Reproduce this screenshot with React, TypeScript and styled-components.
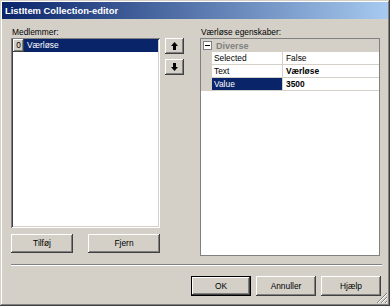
import styled, { createGlobalStyle } from "styled-components";

const Global = createGlobalStyle`
  html, body { margin: 0; padding: 0; background: #d4d0c8; }
  body { font-family: "Liberation Sans", Arial, sans-serif; font-size: 8.4px; color: #000; }
`;

const raised = `
  box-shadow: inset -1px -1px #404040, inset 1px 1px #ffffff,
    inset -2px -2px #808080, inset 2px 2px #d4d0c8;
`;

export default function App() {
  return (
    <>
      <Global />
      <Window>
        <TitleBar>ListItem Collection-editor</TitleBar>
        <Body>
          <Top>
            <LeftCol>
              <Label>Medlemmer:</Label>
              <ListBox>
                <ListRow>
                  <IndexCell>0</IndexCell>
                  <ItemName $selected>Værløse</ItemName>
                </ListRow>
              </ListBox>
              <ListButtons>
                <Button $w={62}>Tilføj</Button>
                <Button $w={72}>Fjern</Button>
              </ListButtons>
            </LeftCol>
            <ArrowCol>
              <ArrowButton>
                <Arrow dir="up" />
              </ArrowButton>
              <ArrowButton>
                <Arrow dir="down" />
              </ArrowButton>
            </ArrowCol>
            <RightCol>
              <Label>Værløse egenskaber:</Label>
              <PropGrid>
                <Category>
                  <Collapse>
                    <svg width="9" height="9" viewBox="0 0 9 9">
                      <rect x="0.5" y="0.5" width="8" height="8" fill="#fff" stroke="#808080" />
                      <path d="M2 4.5h5" stroke="#000" />
                    </svg>
                  </Collapse>
                  Diverse
                </Category>
                <PropRow>
                  <Margin />
                  <PropName>Selected</PropName>
                  <PropValue>False</PropValue>
                </PropRow>
                <PropRow>
                  <Margin />
                  <PropName>Text</PropName>
                  <PropValue $bold>Værløse</PropValue>
                </PropRow>
                <PropRow>
                  <Margin />
                  <PropName $selected>Value</PropName>
                  <PropValue $bold>3500</PropValue>
                </PropRow>
              </PropGrid>
            </RightCol>
          </Top>
          <Separator />
          <Footer>
            <DefaultButton>OK</DefaultButton>
            <Button $w={60} $h={20}>Annuller</Button>
            <Button $w={60} $h={20}>Hjælp</Button>
          </Footer>
        </Body>
        <Grip>
          <svg width="12" height="12" viewBox="0 0 12 12">
            <path d="M11 1L1 11M11 5L5 11M11 9L9 11" stroke="#808080" strokeWidth="1" />
            <path d="M11 2L2 11M11 6L6 11M11 10L10 11" stroke="#ffffff" strokeWidth="1" />
          </svg>
        </Grip>
      </Window>
    </>
  );
}

function Arrow({ dir }: { dir: "up" | "down" }) {
  return (
    <svg width="7" height="8" viewBox="0 0 7 8" style={{ transform: dir === "down" ? "rotate(180deg)" : undefined }}>
      <path d="M3.5 0L7 4H5V8H2V4H0Z" fill="#000" />
    </svg>
  );
}

const Window = styled.div`
  position: relative;
  width: 390px;
  height: 306px;
  box-sizing: border-box;
  padding: 2px;
  background: #d4d0c8;
  box-shadow: inset -1px -1px #404040, inset 1px 1px #d4d0c8,
    inset -2px -2px #808080, inset 2px 2px #ffffff;
  display: flex;
  flex-direction: column;
`;

const TitleBar = styled.div`
  height: 17px;
  line-height: 17px;
  padding-left: 3px;
  background: linear-gradient(to right, #0a246a, #a6caf0);
  color: #fff;
  font-weight: bold;
  font-size: 9.4px;
`;

const Body = styled.div`
  display: flex;
  flex-direction: column;
  padding: 7px 6px 0 9px;
`;

const Top = styled.div`
  display: flex;
`;

const LeftCol = styled.div`
  width: 149px;
  display: flex;
  flex-direction: column;
`;

const Label = styled.div`
  height: 12px;
  line-height: 12px;
  padding-left: 1px;
`;

const ListBox = styled.div`
  height: 190px;
  box-sizing: border-box;
  padding: 1px 2px 2px 2px;
  background: #fff;
  box-shadow: inset 1px 1px #808080, inset -1px -1px #ffffff,
    inset 2px 2px #404040, inset -2px -2px #d4d0c8;
`;

const ListRow = styled.div`
  display: flex;
  height: 13px;
  line-height: 13px;
`;

const IndexCell = styled.div`
  width: 11px;
  box-sizing: border-box;
  text-align: center;
  background: #d4d0c8;
  ${raised}
`;

const ItemName = styled.div<{ $selected?: boolean }>`
  flex: 1;
  padding-left: 3px;
  background: ${(p) => (p.$selected ? "#0a246a" : "transparent")};
  color: ${(p) => (p.$selected ? "#fff" : "#000")};
`;

const ListButtons = styled.div`
  display: flex;
  justify-content: space-between;
  margin-top: 6px;
`;

const Button = styled.div<{ $w: number; $h?: number }>`
  width: ${(p) => p.$w}px;
  height: ${(p) => p.$h ?? 19}px;
  line-height: ${(p) => p.$h ?? 19}px;
  text-align: center;
  background: #d4d0c8;
  ${raised}
`;

const DefaultButton = styled.div`
  width: 60px;
  height: 20px;
  box-sizing: border-box;
  line-height: 18px;
  text-align: center;
  border: 1px solid #000;
  background: #d4d0c8;
  ${raised}
`;

const ArrowCol = styled.div`
  width: 19px;
  margin-left: 5px;
  padding-top: 12px;
  display: flex;
  flex-direction: column;
  gap: 5px;
`;

const ArrowButton = styled.div`
  height: 16px;
  display: flex;
  align-items: center;
  justify-content: center;
  background: #d4d0c8;
  ${raised}
`;

const RightCol = styled.div`
  width: 180px;
  margin-left: 16px;
  display: flex;
  flex-direction: column;
`;

const PropGrid = styled.div`
  height: 218px;
  box-sizing: border-box;
  border: 1px solid #808080;
  background: #fff;
`;

const Category = styled.div`
  height: 13px;
  display: flex;
  align-items: center;
  gap: 4px;
  padding-left: 2px;
  background: #d4d0c8;
  color: #808080;
  font-weight: bold;
  font-size: 9px;
`;

const Collapse = styled.span`
  display: flex;
`;

const PropRow = styled.div`
  display: grid;
  grid-template-columns: 11px 71px 1fr;
  height: 13px;
  line-height: 12px;
`;

const Margin = styled.div`
  background: #d4d0c8;
`;

const PropName = styled.div<{ $selected?: boolean }>`
  padding-left: 2px;
  border-right: 1px solid #d4d0c8;
  border-bottom: 1px solid #d4d0c8;
  background: ${(p) => (p.$selected ? "#0a246a" : "#fff")};
  color: ${(p) => (p.$selected ? "#fff" : "#000")};
`;

const PropValue = styled.div<{ $bold?: boolean }>`
  padding-left: 3px;
  border-bottom: 1px solid #d4d0c8;
  font-weight: ${(p) => (p.$bold ? "bold" : "normal")};
`;

const Separator = styled.div`
  margin-top: 8px;
  border-top: 1px solid #808080;
  border-bottom: 1px solid #ffffff;
`;

const Footer = styled.div`
  display: flex;
  justify-content: flex-end;
  gap: 5px;
  margin-top: 10px;
  padding-right: 1px;
`;

const Grip = styled.div`
  position: absolute;
  right: 2px;
  bottom: 2px;
  width: 12px;
  height: 12px;
`;
